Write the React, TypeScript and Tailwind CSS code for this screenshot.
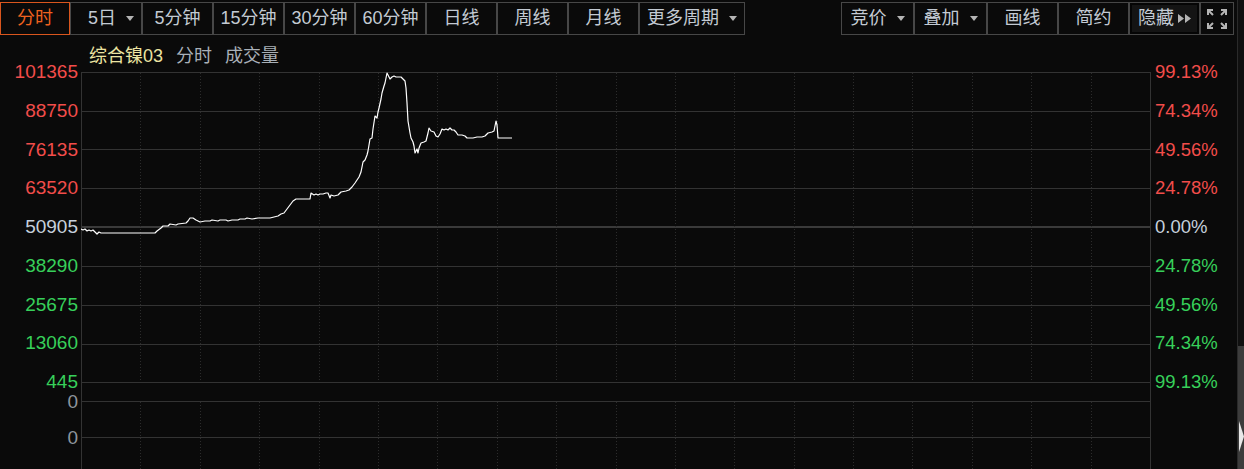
const leftTabs = ['5日', '5分钟', '15分钟', '30分钟', '60分钟', '日线', '周线', '月线'];

const leftLabels = [
  { t: '101365', c: 'text-[#f24d4a]' },
  { t: '88750', c: 'text-[#f24d4a]' },
  { t: '76135', c: 'text-[#f24d4a]' },
  { t: '63520', c: 'text-[#f24d4a]' },
  { t: '50905', c: 'text-[#c6d0dc]' },
  { t: '38290', c: 'text-[#37d05a]' },
  { t: '25675', c: 'text-[#37d05a]' },
  { t: '13060', c: 'text-[#37d05a]' },
  { t: '445', c: 'text-[#37d05a]' },
];

const rightLabels = [
  { t: '99.13%', c: 'text-[#f24d4a]' },
  { t: '74.34%', c: 'text-[#f24d4a]' },
  { t: '49.56%', c: 'text-[#f24d4a]' },
  { t: '24.78%', c: 'text-[#f24d4a]' },
  { t: '0.00%', c: 'text-[#c6d0dc]' },
  { t: '24.78%', c: 'text-[#37d05a]' },
  { t: '49.56%', c: 'text-[#37d05a]' },
  { t: '74.34%', c: 'text-[#37d05a]' },
  { t: '99.13%', c: 'text-[#37d05a]' },
];

// price trace, page coords (shifted into the chart by the <g> transform)
const price =
  '81,229 83,230 85,229 87,231 89,230 91,231 93,230 95,232 97,234 99,232 101,233 155,233 157,231 161,228 163,226 168,226 170,224 176,225 178,224 186,223 188,221 190,218 193,218 196,220 198,221 200,222 205,221 210,221 212,220 218,221 220,220 226,220 228,221 232,220 238,220 240,219 245,219 247,218 252,219 258,218 262,218 270,218 274,217 278,216 281,214 284,213 287,209 290,205 293,201 296,199 310,199 311,193 314,195 316,194 318,195 320,194 323,194 326,193 328,193 330,198 331,195 334,196 338,195 341,192 346,191 349,190 352,187 355,183 357,180 359,177 361,172 363,162 365,160 367,155 368,151 370,139 372,138 373,129 375,116 377,118 378,112 379,108 381,99 382,93 384,86 385,83 387,73 389,77 390,79 392,77 394,76 396,77 401,77 403,79 405,81 406,88 407,103 408,121 410,133 411,138 413,142 414,146 415,153 417,149 418,153 419,148 421,143 424,142 426,141 428,133 429,128 431,131 434,132 436,136 438,137 440,134 442,129 444,130 446,129 448,130 450,128 452,130 454,130 456,132 458,135 462,135 465,136 467,138 473,138 477,137 482,137 485,136 488,133 492,132 494,131 496,121 497,125 498,138 512,138';

const hLines = [0.5, 39.5, 77.5, 116.5, 194.5, 233.5, 272.5, 310.5];
const vLines = Array.from({ length: 17 }, (_, i) => Math.round((i + 1) * (1069 / 18)) + 0.5);

function Caret() {
  return (
    <svg width="8" height="5" viewBox="0 0 8 5" className="ml-[10px]">
      <path d="M0 0H8L4 5Z" fill="#b4b4b4" />
    </svg>
  );
}

function Tab({ label, caret, w = 'w-[71px]' }: { label: string; caret?: boolean; w?: string }) {
  return (
    <div className={`${w} h-[33px] border border-[#474747] flex items-center justify-center text-[#c3cad3]`}>
      <span>{label}</span>
      {caret && <Caret />}
    </div>
  );
}

function Chart() {
  return (
    <svg width="1070" height="397" className="block">
      {/* main panel */}
      {hLines.map((y) => (
        <line key={y} x1="0" x2="1070" y1={y} y2={y} stroke="#333333" strokeWidth="1" />
      ))}
      <rect x="0" y="154" width="1070" height="2" fill="#3a3a3a" />
      {vLines.map((x) => (
        <g key={x}>
          <line x1={x} x2={x} y1="1" y2="310" stroke="#2c2c2c" strokeDasharray="1 2" />
          <line x1={x} x2={x} y1="330" y2="397" stroke="#2c2c2c" strokeDasharray="1 2" />
        </g>
      ))}
      {/* volume panel */}
      <line x1="0" x2="1070" y1="329.5" y2="329.5" stroke="#333333" />
      <line x1="0" x2="1070" y1="365.5" y2="365.5" stroke="#333333" />
      <line x1="0.5" x2="0.5" y1="0" y2="397" stroke="#333333" />
      <line x1="1069.5" x2="1069.5" y1="0" y2="397" stroke="#333333" />
      <g transform="translate(-81,-72)">
        <polyline points={price} fill="none" stroke="#ffffff" strokeWidth="1.2" strokeLinejoin="round" />
      </g>
    </svg>
  );
}

export default function App() {
  return (
    <div className="w-[1244px] h-[469px] bg-[#0a0a0a] flex overflow-hidden font-['Liberation_Sans','Noto_Sans_CJK_SC',sans-serif]">
      <div className="w-[1237px] flex flex-col">
        {/* toolbar */}
        <div className="h-[37px] pt-[2px] flex justify-between pr-[3px] text-[18px]">
          <div className="flex">
            <div className="w-[70px] h-[33px] border border-[#d9561e] flex items-center justify-center text-[#f0621f]">
              分时
            </div>
            <div className="w-[72px] h-[33px] border border-[#474747] flex items-center justify-center pl-[10px] text-[#c3cad3]">
              <span>5日</span>
              <Caret />
            </div>
            {leftTabs.slice(1).map((t) => (
              <Tab key={t} label={t} />
            ))}
            <Tab label="更多周期" caret w="w-[106px]" />
          </div>
          <div className="flex">
            <Tab label="竞价" caret w="w-[73px]" />
            <Tab label="叠加" caret w="w-[73px]" />
            <Tab label="画线" />
            <Tab label="简约" />
            <div className="w-[71px] h-[33px] border border-[#474747] bg-[#141414] shadow-[inset_0_0_0_2px_#050505] flex items-center justify-center text-[#c3cad3]">
              <span>隐藏</span>
              <svg width="13" height="9" viewBox="0 0 13 9" className="ml-[4px]">
                <path d="M0 0L6 4.5L0 9Z M7 0L13 4.5L7 9Z" fill="#b4b4b4" />
              </svg>
            </div>
            <div className="w-[34px] h-[33px] border border-[#474747] flex items-center justify-center">
              <svg width="20" height="20" viewBox="0 0 20 20" fill="none" stroke="#b4b4b4" strokeWidth="2">
                <path d="M1 6V1H6 M1 1L6 6" />
                <path d="M14 1H19V6 M19 1L14 6" />
                <path d="M1 14V19H6 M1 19L6 14" />
                <path d="M19 14V19H14 M19 19L14 14" />
              </svg>
            </div>
          </div>
        </div>

        {/* body */}
        <div className="flex flex-1">
          <div className="w-[81px] flex flex-col items-end pr-[3px] pt-[25px] text-[19px] leading-[20px]">
            <div className="h-[330px] flex flex-col justify-between items-end">
              {leftLabels.map((l) => (
                <div key={l.t} className={`h-[20px] ${l.c}`}>{l.t}</div>
              ))}
            </div>
            <div className="h-[20px] text-[#8e959d]">0</div>
            <div className="h-[20px] mt-[16px] text-[#8e959d]">0</div>
          </div>

          <div className="w-[1070px] flex flex-col">
            <div className="h-[35px] pt-[9px] pl-[8px] text-[18px] leading-[20px] flex gap-[13px]">
              <span className="text-[#ece4a2]">综合镍03</span>
              <span className="text-[#a9b0b8]">分时</span>
              <span className="text-[#a9b0b8]">成交量</span>
            </div>
            <Chart />
          </div>

          <div className="flex-1 pl-[4px] pt-[25px] text-[18.5px] leading-[20px]">
            <div className="h-[330px] flex flex-col justify-between">
              {rightLabels.map((l, i) => (
                <div key={i} className={`h-[20px] ${l.c}`}>{l.t}</div>
              ))}
            </div>
          </div>
        </div>
      </div>

      {/* scrollbar */}
      <div className="w-[7px] border-l border-[#2a2a2a] bg-[#101010] flex flex-col">
        <div className="mt-auto h-[123px] bg-[#3c3c3c] flex flex-col pt-[75px]">
          <svg width="6" height="31" viewBox="0 0 6 31">
            <path d="M1 0L6 15.5L1 31Z" fill="#e8e8e8" />
          </svg>
        </div>
      </div>
    </div>
  );
}
